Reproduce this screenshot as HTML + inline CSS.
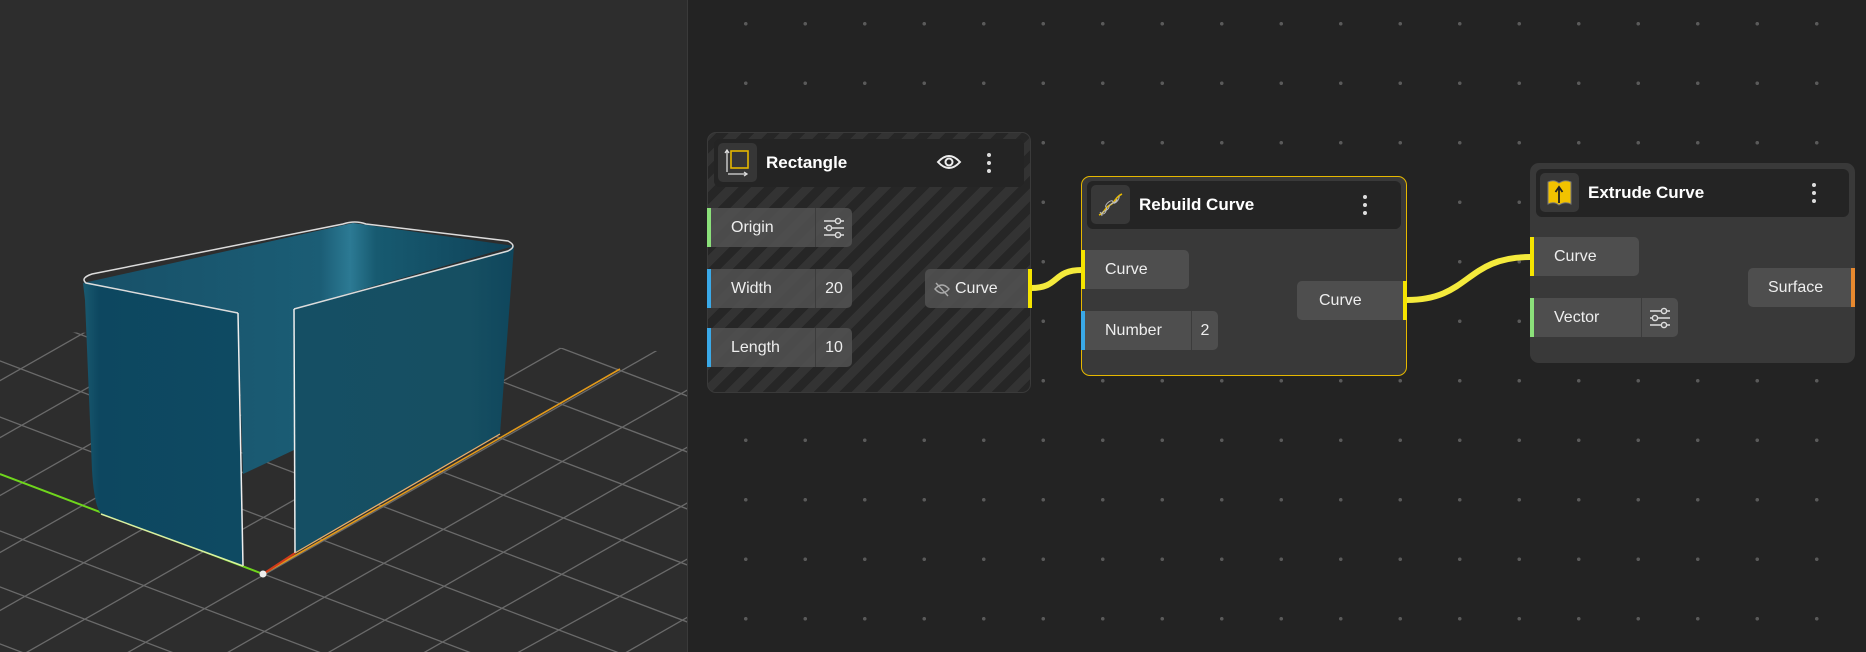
<!DOCTYPE html>
<html><head><meta charset="utf-8"><style>
*{margin:0;padding:0;box-sizing:border-box}
html,body{width:1866px;height:652px;overflow:hidden}
body{background:#232323;font-family:"Liberation Sans",sans-serif;position:relative}
svg{display:block}
#view{position:absolute;left:0;top:0;width:688px;height:652px;background:#2d2d2d;border-right:1px solid #3a3a3a;overflow:hidden}
#canvas{position:absolute;left:689px;top:0;right:0;bottom:0;background-color:#232323;
background-image:radial-gradient(circle,#5a5a5a 1.6px,transparent 2px);background-size:59.5px 59.5px;background-position:27px -6px}
.node{position:absolute;background:#393939;border-radius:9px}
.hdr{position:absolute;background:#242424;border-radius:6px;height:48px}
.ico{position:absolute;left:4px;top:4px;width:39px;height:39px;background:#383838;border-radius:5px}
.title{position:absolute;left:52px;top:14px;color:#fff;font-weight:bold;font-size:17px}
.row{position:absolute;height:39px;background:rgba(82,82,82,0.85);border-radius:0 5px 5px 0;color:#eee;font-size:16px;line-height:39px}
.row .lbl{position:absolute;left:24px}
.row .val{position:absolute;top:0;height:39px;border-left:1px solid #3c3c3c;text-align:center}
.port{position:absolute;top:0;width:4px;height:39px}
.dots{position:absolute;width:4px}
.dots i{display:block;width:4px;height:4px;border-radius:2px;background:#ddd;margin-bottom:4px}
</style></head><body>
<div id="view">
<svg width="688" height="652" viewBox="0 0 688 652">
<defs>
<clipPath id="g"><polygon points="0,330 688,352 688,652 0,652"/></clipPath>
<linearGradient id="back" x1="0" x2="1" y1="0" y2="0">
<stop offset="0" stop-color="#175068"/><stop offset="0.55" stop-color="#1b5d75"/><stop offset="0.62" stop-color="#2c7a94"/><stop offset="0.68" stop-color="#175a70"/><stop offset="1" stop-color="#0f4258"/></linearGradient>
<linearGradient id="lf" x1="0" x2="1"><stop offset="0" stop-color="#1a5a70"/><stop offset="0.1" stop-color="#0d4760"/><stop offset="1" stop-color="#0e4a62"/></linearGradient>
<linearGradient id="rf" x1="0" x2="1"><stop offset="0" stop-color="#154f64"/><stop offset="0.8" stop-color="#164f62"/><stop offset="1" stop-color="#0f465c"/></linearGradient>
</defs>
<g clip-path="url(#g)" stroke="#6a6a6a" stroke-width="1.3">
<line x1="-50" y1="625" x2="740" y2="925"/><line x1="-50" y1="568" x2="740" y2="868"/>
<line x1="-50" y1="512" x2="740" y2="812"/><line x1="-50" y1="455" x2="740" y2="755"/>
<line x1="-50" y1="398" x2="740" y2="699"/><line x1="-50" y1="342" x2="740" y2="642"/>
<line x1="-50" y1="285" x2="740" y2="585"/><line x1="-50" y1="229" x2="740" y2="529"/>
<line x1="-50" y1="172" x2="740" y2="472"/><line x1="-50" y1="116" x2="740" y2="416"/>
<line x1="-50" y1="60" x2="740" y2="359"/><line x1="-50" y1="3" x2="740" y2="303"/>
<line x1="-50" y1="1041" x2="740" y2="587"/><line x1="-50" y1="966" x2="740" y2="530"/>
<line x1="-50" y1="922" x2="740" y2="473"/><line x1="-50" y1="869" x2="740" y2="417"/>
<line x1="-50" y1="811" x2="740" y2="360"/><line x1="-50" y1="754" x2="740" y2="303"/>
<line x1="-50" y1="696" x2="740" y2="246"/><line x1="-50" y1="639" x2="740" y2="189"/>
<line x1="-50" y1="581" x2="740" y2="131"/><line x1="-50" y1="524" x2="740" y2="74"/>
<line x1="-50" y1="466" x2="740" y2="17"/><line x1="-50" y1="409" x2="740" y2="-40"/>
</g>
<line x1="0" y1="474" x2="263" y2="574" stroke="#6fd61c" stroke-width="2"/>
<line x1="263" y1="574" x2="620" y2="369" stroke="#e39a1a" stroke-width="1.6"/>
<line x1="263" y1="574" x2="295" y2="553" stroke="#d23a1a" stroke-width="2"/>
<polygon points="83,283 353,223 514,246 294,309 294,450 243,474 238,313" fill="url(#back)"/>
<path d="M83,283 L238,313 L243,566 L101,514 Q94,505 92,470 L85,300 Z" fill="url(#lf)"/>
<polygon points="294,309 508,250 514,246 500,434 295,553" fill="url(#rf)"/>
<path d="M238,313 L86,283 Q80,278 92,274 L343,224 Q355,220 366,224 L508,241 Q518,246 508,251 L294,309" fill="none" stroke="#dcdcdc" stroke-width="1.5"/>
<line x1="238" y1="313" x2="243" y2="566" stroke="#eee" stroke-width="1.5"/>
<line x1="294" y1="309" x2="295" y2="553" stroke="#eee" stroke-width="1.5"/>
<line x1="101" y1="514" x2="243" y2="566" stroke="#d8f0a0" stroke-width="1.5"/>
<line x1="295" y1="553" x2="500" y2="434" stroke="#e8b070" stroke-width="1.3"/>
<circle cx="263" cy="574" r="3.5" fill="#eee"/>
</svg>
</div>
<div id="canvas"></div>

<svg style="position:absolute;left:0;top:0" width="1866" height="652">
<path d="M1031,288 C1060,288 1052,270 1082,270" stroke="#f4ea3c" stroke-width="6" fill="none"/>
<path d="M1407,300 C1470,300 1465,257 1530,257" stroke="#f4ea3c" stroke-width="6" fill="none"/>
</svg>

<!-- Rectangle -->
<div class="node" style="left:707px;top:132px;width:324px;height:261px;border:1px solid #3a3a3a;background:repeating-linear-gradient(-45deg,#262626 0 9px,#333 9px 18px)">
 <div class="hdr" style="left:6px;top:6px;width:310px">
  <div class="ico" style="background:#363636">
   <svg width="39" height="39"><rect x="13" y="8" width="17" height="17" fill="none" stroke="#e6b800" stroke-width="1.6"/>
   <path d="M9,8 V29 M7,10 L9,7 L11,10 M10,31 H28 M26,29 L29,31 L26,33" stroke="#ddd" stroke-width="1.3" fill="none"/></svg>
  </div>
  <div class="title">Rectangle</div>
  <svg style="position:absolute;left:222px;top:12px" width="26" height="22"><path d="M2,11 Q13,-1 24,11 Q13,23 2,11 Z" fill="none" stroke="#eee" stroke-width="2"/><circle cx="13" cy="11" r="3.5" fill="none" stroke="#eee" stroke-width="2"/></svg>
  <div class="dots" style="left:273px;top:14px"><i></i><i></i><i></i></div>
 </div>
 <div class="row" style="left:-1px;top:75px;width:145px"><div class="port" style="left:0;background:#8be07a"></div><span class="lbl">Origin</span>
  <div class="val" style="left:108px;width:37px"><svg width="37" height="39"><path d="M8,13 H28 M8,20 H28 M8,27 H28" stroke="#ddd" stroke-width="1.5"/><circle cx="22" cy="13" r="2.6" fill="#555" stroke="#ddd" stroke-width="1.4"/><circle cx="13" cy="20" r="2.6" fill="#555" stroke="#ddd" stroke-width="1.4"/><circle cx="22" cy="27" r="2.6" fill="#555" stroke="#ddd" stroke-width="1.4"/></svg></div></div>
 <div class="row" style="left:-1px;top:136px;width:145px"><div class="port" style="left:0;background:#3aa9e8"></div><span class="lbl">Width</span><div class="val" style="left:108px;width:37px">20</div></div>
 <div class="row" style="left:-1px;top:195px;width:145px"><div class="port" style="left:0;background:#3aa9e8"></div><span class="lbl">Length</span><div class="val" style="left:108px;width:37px">10</div></div>
 <div class="row" style="left:217px;top:136px;width:107px;border-radius:5px 0 0 5px">
  <svg style="position:absolute;left:8px;top:11px" width="18" height="18"><path d="M2,9 Q9,1 16,9 Q9,17 2,9 Z" fill="none" stroke="#aaa" stroke-width="1.4"/><line x1="3" y1="3" x2="15" y2="16" stroke="#aaa" stroke-width="1.4"/></svg>
  <span class="lbl" style="left:30px">Curve</span><div class="port" style="right:0;background:#f5e400"></div></div>
</div>

<!-- Rebuild Curve -->
<div class="node" style="left:1081px;top:176px;width:326px;height:200px;border:1.5px solid #e6b800">
 <div class="hdr" style="left:5px;top:4px;width:314px">
  <div class="ico"><svg width="39" height="39"><path d="M8,30 C14,28 14,22 19,20 C24,18 24,12 31,9" stroke="#e6b800" stroke-width="1.6" fill="none"/><path d="M9,27 C13,33 17,24 15,22 C13,20 21,13 22,17 C23,21 29,14 28,11 M11,31 C9,25 17,27 18,22 C19,17 25,19 26,14" stroke="#bbb" stroke-width="1" fill="none"/></svg></div>
  <div class="title">Rebuild Curve</div>
  <div class="dots" style="left:276px;top:14px"><i></i><i></i><i></i></div>
 </div>
 <div class="row" style="left:-1px;top:73px;width:108px"><div class="port" style="left:0;background:#f5e400"></div><span class="lbl">Curve</span></div>
 <div class="row" style="left:-1px;top:134px;width:137px"><div class="port" style="left:0;background:#3aa9e8"></div><span class="lbl">Number</span><div class="val" style="left:110px;width:27px">2</div></div>
 <div class="row" style="left:215px;top:104px;width:110px;border-radius:5px 0 0 5px"><span class="lbl" style="left:22px">Curve</span><div class="port" style="right:0;background:#f5e400"></div></div>
</div>

<!-- Extrude Curve -->
<div class="node" style="left:1530px;top:163px;width:325px;height:200px">
 <div class="hdr" style="left:6px;top:6px;width:313px">
  <div class="ico"><svg width="39" height="39"><path d="M8,9 Q14,6 19,10 Q25,6 31,9 V31 Q25,28 19,32 Q14,28 8,31 Z" fill="#f2c200" stroke="#777" stroke-width="1"/><path d="M19,30 V15 M15.5,19 L19,14 L22.5,19" stroke="#222" stroke-width="1.8" fill="none"/></svg></div>
  <div class="title">Extrude Curve</div>
  <div class="dots" style="left:276px;top:14px"><i></i><i></i><i></i></div>
 </div>
 <div class="row" style="left:0;top:74px;width:109px"><div class="port" style="left:0;background:#f5e400"></div><span class="lbl">Curve</span></div>
 <div class="row" style="left:0;top:135px;width:148px"><div class="port" style="left:0;background:#8be07a"></div><span class="lbl">Vector</span>
  <div class="val" style="left:111px;width:37px"><svg width="37" height="39"><path d="M8,13 H28 M8,20 H28 M8,27 H28" stroke="#ddd" stroke-width="1.5"/><circle cx="22" cy="13" r="2.6" fill="#555" stroke="#ddd" stroke-width="1.4"/><circle cx="13" cy="20" r="2.6" fill="#555" stroke="#ddd" stroke-width="1.4"/><circle cx="22" cy="27" r="2.6" fill="#555" stroke="#ddd" stroke-width="1.4"/></svg></div></div>
 <div class="row" style="left:218px;top:105px;width:107px;border-radius:5px 0 0 5px"><span class="lbl" style="left:20px">Surface</span><div class="port" style="right:0;background:#e8892f"></div></div>
</div>
</body></html>
